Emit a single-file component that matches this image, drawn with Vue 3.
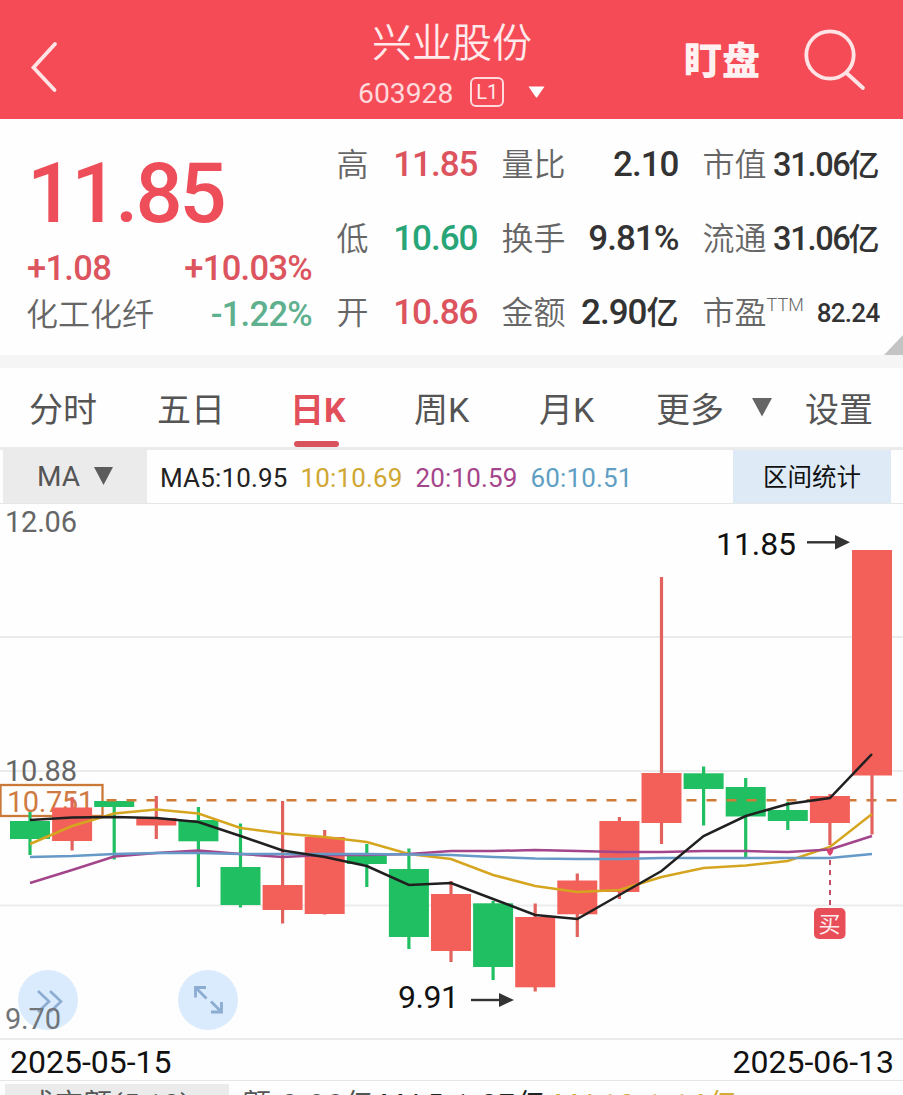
<script setup>
const stats = [
  [
    { label: '高', value: '11.85', tone: 'up' },
    { label: '量比', value: '2.10' },
    { label: '市值', value: '31.06', unit: '亿', tone: 'tight' },
  ],
  [
    { label: '低', value: '10.60', tone: 'down' },
    { label: '换手', value: '9.81%' },
    { label: '流通', value: '31.06', unit: '亿', tone: 'tight' },
  ],
  [
    { label: '开', value: '10.86', tone: 'up' },
    { label: '金额', value: '2.90', unit: '亿' },
    { label: '市盈', sup: 'TTM', value: '82.24', tone: 'small' },
  ],
]

const STEP = 42.1
const cx = (i) => 30 + i * STEP

// [direction, wick top, wick bottom, body top, body bottom]
const candles = [
  ['d', 812, 855, 821, 839],
  ['u', 797, 850.5, 807.5, 841],
  ['d', 799, 859.5, 801, 807],
  ['u', 796, 839, 818, 825.5],
  ['d', 807, 887, 820, 841.3],
  ['d', 823.5, 907.5, 867, 905],
  ['u', 801, 923.5, 885, 910],
  ['u', 830, 914.5, 837, 914],
  ['d', 844, 887, 854, 864],
  ['d', 848.5, 949, 869, 937],
  ['u', 881, 962, 894, 951],
  ['d', 901, 980, 903.3, 967],
  ['u', 903.5, 991.5, 917, 987.3],
  ['u', 873.5, 937, 880.5, 914.3],
  ['u', 817, 899, 821, 892],
  ['u', 577, 844, 773, 823],
  ['d', 766.5, 825.5, 773.3, 789],
  ['d', 778, 857, 787, 816.5],
  ['d', 802, 830, 810, 821],
  ['u', 794, 845, 796, 823],
  ['u', 550, 834.5, 550, 775.5],
].map(([dir, wt, wb, bt, bb], i) => ({ dir, wt, wb, bt, bb, x: cx(i) }))
const falling = candles.filter((c) => c.dir === 'd')
const rising = candles.filter((c) => c.dir === 'u')

const averages = [
  { name: 'ma10', ys: [844, 826, 813.5, 809.5, 813.5, 828, 833.5, 837, 842, 854, 859, 875, 886, 892, 890, 877, 868, 865.5, 861, 847, 814] },
  { name: 'ma20', ys: [883, 870, 856.5, 853, 850.5, 854, 857, 855, 855, 854, 851, 851, 850, 851, 852, 852, 851, 851, 852, 849.5, 836] },
  { name: 'ma60', ys: [857, 856, 854, 853, 853, 854, 854, 854, 854, 854.5, 855, 857, 858.5, 859, 859, 858, 858, 858, 858, 858, 854] },
  { name: 'ma5', ys: [820, 817.5, 817, 818, 822, 836, 850.5, 857, 866, 885, 883, 899, 915, 919, 895, 871, 836, 816, 804, 798, 754] },
].map((m) => ({ name: m.name, points: m.ys.map((y, i) => `${cx(i)},${y}`).join(' ') }))
</script>

<template>
  <div class="page">
    <header class="header">
      <svg class="back" width="40" height="60" viewBox="0 0 40 60">
        <path d="M35 7 13.500 30.500 34.500 53" />
      </svg>
      <div class="heading">
        <div class="name">兴业股份</div>
        <div class="code-row">
          <span class="code">603928</span>
          <span class="level">L1</span>
          <svg width="17" height="12" viewBox="0 0 17 12"><path d="M.500 .500h16L9.300 11q-.8 1-1.600 0z" fill="#fff" /></svg>
        </div>
      </div>
      <span class="watch">盯盘</span>
      <svg class="search" width="64" height="64" viewBox="0 0 64 64">
        <circle cx="27" cy="27" r="23.700" />
        <path d="M43.500 45 60 60" />
      </svg>
    </header>

    <section class="quote">
      <div class="summary">
        <div class="price">11.85</div>
        <div class="pair"><span>+1.08</span><span>+10.03%</span></div>
        <div class="pair industry"><span class="sector">化工化纤</span><span class="fall">-1.22%</span></div>
      </div>
      <div class="stats">
        <div v-for="(row, r) in stats" :key="r" class="stat-row">
          <div v-for="s in row" :key="s.label" class="stat">
            <span class="label">{{ s.label }}<i v-if="s.sup">{{ s.sup }}</i></span>
            <span class="value" :class="s.tone">{{ s.value }}<b v-if="s.unit">{{ s.unit }}</b></span>
          </div>
        </div>
      </div>
      <svg class="corner" width="19" height="20"><path d="M19 0V20H0z" fill="#c4c4c4" /></svg>
    </section>
    <div class="band"></div>

    <nav class="tabs">
      <span>分时</span>
      <span>五日</span>
      <span class="active">日K</span>
      <span>周K</span>
      <span>月K</span>
      <span>更多</span>
      <svg width="20" height="19"><path d="M0 0H20L10 18.500z" fill="#666" /></svg>
      <span>设置</span>
    </nav>

    <div class="ma-row">
      <div class="selector">MA <svg width="19" height="19"><path d="M0 0H19L9.500 18z" fill="#5c5c5c" /></svg></div>
      <span class="t5">MA5:10.95</span>
      <span class="t10">10:10.69</span>
      <span class="t20">20:10.59</span>
      <span class="t60">60:10.51</span>
      <div class="range">区间统计</div>
    </div>

    <svg class="chart" width="903" height="536" viewBox="0 504 903 536">
      <g class="grid">
        <path d="M0 637H903M0 771H903M0 905.500H903" />
        <path d="M0 1039H903" />
      </g>
      <g class="axis">
        <text x="5" y="532" textLength="72">12.06</text>
        <text x="5" y="781" textLength="72">10.88</text>
      </g>

      <rect x="0.500" y="785" width="102" height="31" class="tag" />
      <text x="7" y="812" textLength="87" class="tag-text">10.751</text>

      <g v-for="c in falling" :key="c.x" class="down-candle">
        <rect :x="c.x - 1.600" :y="c.wt" width="3.200" :height="c.wb - c.wt" />
        <rect :x="c.x - 20" :y="c.bt" width="40" :height="c.bb - c.bt" />
      </g>
      <path d="M106.500 800.300H903" class="cost" />
      <g v-for="c in rising" :key="c.x">
        <rect :x="c.x - 1.600" :y="c.wt" width="3.200" :height="c.wb - c.wt" class="up-wick" />
        <rect :x="c.x - 20" :y="c.bt" width="40" :height="c.bb - c.bt" class="up-body" />
      </g>
      <polyline v-for="m in averages" :key="m.name" :points="m.points" class="avg" :class="m.name" />

      <path d="M830 860V908" class="buy-line" />
      <path d="M826.500 849h7l-1 4-2.500 3-2.500-3z" fill="#d9436b" />
      <rect x="814" y="908" width="31.500" height="31" rx="5" fill="#e84e58" />
      <text x="829.500" y="932" text-anchor="middle" class="buy-text">买</text>

      <text x="716" y="555" textLength="80" class="mark">11.85</text>
      <path d="M807 542.300H836" class="arrow" />
      <path d="M835 535 850 542.300 835 549.500z" class="arrow-head" />
      <text x="398" y="1007.500" textLength="61" class="mark">9.91</text>
      <path d="M471 1000H500" class="arrow" />
      <path d="M499 993 514 1000 499 1007z" class="arrow-head" />

      <circle cx="48" cy="1000" r="30" class="bubble" />
      <path d="M38 991 49 1001.500 38 1012M50 991 61 1001.500 50 1012" class="glyph" />
      <circle cx="208" cy="1000" r="30" class="bubble" />
      <path d="M206.500 998.500 195.500 987.500M195.500 997.500V987.500H206M211 1001.500 221.500 1012M211 1012H221.500V1002" class="glyph expand" />
      <text x="5" y="1029" textLength="56" class="low">9.70</text>
    </svg>

    <div class="dates"><span>2025-05-15</span><span>2025-06-13</span></div>

    <div class="volume">
      <div class="vol-select">成交额(5,10)</div>
      <span class="v0">额:2.90亿</span>
      <span class="v5">MA5:1.37亿</span>
      <span class="v10">MA10:1.16亿</span>
    </div>
  </div>
</template>

<style>
body {
  margin: 0;
  background: #fefefe;
}
</style>

<style scoped>
.page {
  width: 903px;
  height: 1095px;
  overflow: hidden;
  background: #fefefe;
  font-family: Roboto, 'Noto Sans CJK SC', sans-serif;
  color: #555;
}
.page svg {
  display: block;
  flex: none;
}
.header {
  box-sizing: border-box;
  height: 119px;
  display: flex;
  background: #f54b57;
  color: #ffe9eb;
}
.back {
  margin: 37px 0 0 20px;
}
.back path,
.search circle,
.search path {
  fill: none;
  stroke: #ffe3e5;
  stroke-width: 3.8;
  stroke-linecap: round;
}
.heading {
  width: 187px;
  margin-left: 298px;
}
.name {
  margin: 19px 0 0 14px;
  font-size: 40px;
  line-height: 50px;
  font-weight: 350;
  white-space: nowrap;
}
.code-row {
  display: flex;
  align-items: center;
  height: 32px;
  margin-top: 7px;
}
.code {
  font-size: 28.3px;
  line-height: 32px;
  padding-top: 3px;
  color: #ffd9db;
}
.level {
  box-sizing: border-box;
  width: 34px;
  height: 30px;
  margin: 0 24px 0 17px;
  border: 2px solid #ffd9db;
  border-radius: 6px;
  font-size: 20px;
  line-height: 27px;
  text-align: center;
}
.watch {
  margin: 36px 0 0 139px;
  font-size: 38px;
  line-height: 50px;
  font-weight: 900;
  color: #fff1f2;
}
.search {
  margin: 28px 0 0 43px;
}
.quote {
  position: relative;
  display: flex;
  height: 236px;
}
.summary {
  width: 285px;
  padding-left: 27px;
}
.price {
  height: 125px;
  font-size: 83px;
  line-height: 149px;
  font-weight: 500;
  letter-spacing: -3px;
  color: #ee4e59;
}
.pair {
  display: flex;
  justify-content: space-between;
  height: 46px;
  font-size: 34.5px;
  line-height: 49px;
  font-weight: 500;
  letter-spacing: -0.7px;
  color: #dc545e;
}
.sector {
  margin-left: -1px;
  padding-top: 1px;
  font-size: 32px;
  font-weight: 350;
  letter-spacing: 0;
  color: #666;
}
.fall {
  color: #5fb08f;
}
.stats {
  width: 542px;
  margin-left: 24.5px;
  padding-top: 9px;
}
.stat-row {
  display: grid;
  grid-template-columns: 141px 177px 177px;
  column-gap: 24px;
  height: 74px;
}
.stat {
  display: flex;
  justify-content: space-between;
  line-height: 74px;
  white-space: nowrap;
}
.label {
  font-size: 32px;
  font-weight: 350;
  color: #666;
}
.label i {
  font-size: 18px;
  font-style: normal;
  vertical-align: 13px;
  line-height: 1;
}
.value {
  font-size: 35px;
  font-weight: 500;
  letter-spacing: -1px;
  color: #333;
}
.value b {
  font-size: 32px;
  font-weight: 500;
  letter-spacing: 0;
}
.up {
  color: #dc545e;
}
.down {
  color: #27a577;
}
.tight {
  font-size: 32.5px;
  letter-spacing: -1.3px;
}
.tight b {
  margin-left: -1px;
  font-size: 31px;
}
.small {
  font-size: 26px;
  letter-spacing: -0.7px;
}
.corner {
  position: absolute;
  right: 0;
  bottom: 0;
}
.band {
  height: 13px;
  background: #f5f5f5;
}
.tabs {
  display: grid;
  grid-template-columns: 128px 133px 124px 125px 117px 96px 53px 70px;
  box-sizing: border-box;
  height: 82px;
  padding-left: 29px;
  border-bottom: 3px solid #ebebeb;
  font-size: 34px;
  font-weight: 400;
  line-height: 84px;
  color: #555;
}
.tabs svg {
  margin-top: 30px;
}
.tabs .active {
  position: relative;
  color: #e2505b;
  font-weight: 700;
}
.active::after {
  content: '';
  position: absolute;
  left: 4px;
  top: 73px;
  width: 45px;
  height: 6px;
  border-radius: 3px;
  background: #d9535e;
}
.ma-row {
  box-sizing: border-box;
  display: flex;
  height: 54px;
  padding: 0 12px 0 3px;
  border-bottom: 1px solid #e6e6e6;
  font-size: 26px;
  line-height: 56px;
  white-space: nowrap;
}
.selector {
  display: flex;
  align-items: center;
  box-sizing: border-box;
  width: 144px;
  margin-right: 13px;
  padding-left: 34px;
  gap: 14px;
  background: #ebebeb;
  font-size: 28px;
  line-height: 61px;
}
.ma-row > span {
  margin-right: 13px;
  letter-spacing: 0.15px;
}
.t5 {
  color: #222;
}
.t10 {
  color: #cfa732;
}
.t20 {
  color: #a5458b;
}
.t60 {
  color: #5f9fc4;
}
.range {
  width: 158px;
  margin-left: auto;
  background: #deebf7;
  font-size: 24.5px;
  text-align: center;
  color: #111;
}
.chart text {
  font-family: Roboto, 'Noto Sans CJK SC', sans-serif;
}
.grid path {
  fill: none;
  stroke: #ebebeb;
  stroke-width: 2;
}
.axis text,
.low {
  font-size: 29px;
  fill: #666;
}
.low {
  fill: #707579;
}
.tag {
  fill: #fefefe;
  stroke: #cb7939;
  stroke-width: 2.3;
}
.tag-text {
  font-size: 29px;
  fill: #cf7a42;
}
.down-candle {
  fill: #20bf62;
}
.up-wick {
  fill: #e2625e;
}
.up-body {
  fill: #f3605a;
}
.cost {
  fill: none;
  stroke: #cd7b38;
  stroke-width: 2.6;
  stroke-dasharray: 10 10;
}
.avg {
  fill: none;
  stroke-width: 2.5;
}
.ma5 {
  stroke: #202020;
}
.ma10 {
  stroke: #d6a520;
}
.ma20 {
  stroke: #a3458b;
}
.ma60 {
  stroke: #6699c8;
}
.buy-line {
  stroke: #c54c65;
  stroke-width: 2;
  stroke-dasharray: 5 5;
}
.buy-text {
  font-size: 22px;
  fill: #ffecee;
}
.mark {
  font-size: 32px;
  fill: #111;
}
.arrow {
  stroke: #333;
  stroke-width: 2.4;
}
.arrow-head {
  fill: #333;
}
.bubble {
  fill: #d9ebfc;
}
.glyph {
  fill: none;
  stroke: #8cacd2;
  stroke-width: 2.6;
}
.expand {
  stroke-width: 2.8;
}
.dates {
  box-sizing: border-box;
  display: flex;
  justify-content: space-between;
  height: 41px;
  padding: 0 9px 0 10px;
  border-bottom: 1px solid #e6e6e6;
  font-size: 32px;
  line-height: 45px;
  color: #111;
}
.volume {
  display: flex;
  height: 14px;
  padding: 3px 0 0 5px;
  font-size: 28px;
  letter-spacing: 2.1px;
  line-height: 42px;
  white-space: nowrap;
}
.vol-select {
  box-sizing: border-box;
  width: 224px;
  margin-right: 14px;
  padding-left: 21px;
  background: #ebebeb;
  letter-spacing: 1px;
}
.v5 {
  margin: 0 7px 0 5px;
  color: #222;
}
.v10 {
  color: #d2ac36;
}
</style>
